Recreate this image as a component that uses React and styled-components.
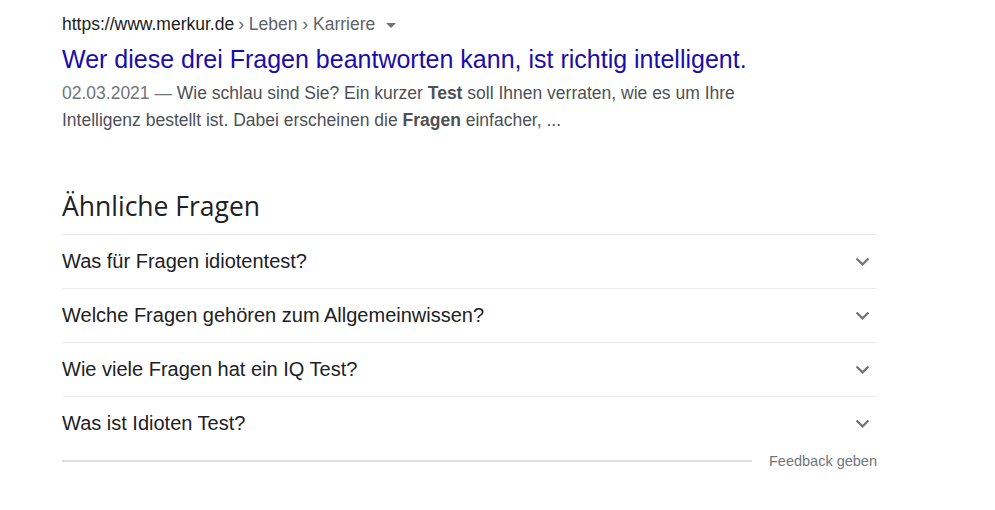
import React from 'react'
import styled, { createGlobalStyle } from 'styled-components'

const GlobalStyle = createGlobalStyle`
  body {
    margin: 0;
    background: #fff;
    font-family: 'Liberation Sans', Arial, sans-serif;
  }
`

const Page = styled.div`
  width: 815px;
  padding: 12px 0 0 62px;
`

const Result = styled.div`
  width: 700px;
`

const UrlLine = styled.div`
  display: flex;
  align-items: center;
  font-size: 17.5px;
  line-height: 24px;
  color: #202124;
`

const Crumbs = styled.span`
  color: #5f6368;
  margin-left: 4px;
`

const Caret = styled.span`
  display: inline-block;
  margin-left: 11px;
  margin-top: 2px;
  border-left: 5px solid transparent;
  border-right: 5px solid transparent;
  border-top: 5px solid #70757a;
`

const Title = styled.a`
  display: block;
  margin-top: 8px;
  font-size: 25px;
  line-height: 30px;
  color: #1a0dab;
  text-decoration: none;
  white-space: nowrap;
`

const Snippet = styled.div`
  margin-top: 6px;
  font-size: 17.5px;
  line-height: 27px;
  color: #4d5156;
`

const Date = styled.span`
  color: #70757a;
`

const Bold = styled.b`
  color: #4d5156;
`

const Related = styled.div`
  margin-top: 56px;
`

const Heading = styled.h2`
  margin: 0;
  font-family: 'Open Sans', Roboto, sans-serif;
  font-weight: 400;
  font-size: 26.5px;
  line-height: 32px;
  color: #202124;
  padding-bottom: 12px;
  border-bottom: 1px solid #ebebeb;
`

const Row = styled.div`
  display: flex;
  align-items: center;
  justify-content: space-between;
  height: 53px;
  border-bottom: ${(p) => (p.last ? 'none' : '1px solid #ebebeb')};
  font-size: 20px;
  color: #202124;
`

const Chevron = styled.svg`
  width: 27px;
  height: 27px;
  margin-right: 1px;
  fill: #70757a;
`

const Footer = styled.div`
  display: flex;
  align-items: center;
  gap: 17px;
  margin-top: 2px;
`

const Line = styled.div`
  flex: 1;
  height: 2px;
  background: #dadce0;
`

const Feedback = styled.span`
  font-size: 14.5px;
  line-height: 18px;
  color: #70757a;
`

const questions = [
  'Was für Fragen idiotentest?',
  'Welche Fragen gehören zum Allgemeinwissen?',
  'Wie viele Fragen hat ein IQ Test?',
  'Was ist Idioten Test?',
]

const App = () => {
  return (
    <>
      <GlobalStyle />
      <Page>
        <Result>
          <UrlLine>
            https://www.merkur.de<Crumbs>› Leben › Karriere</Crumbs>
            <Caret />
          </UrlLine>
          <Title href='#'>
            Wer diese drei Fragen beantworten kann, ist richtig intelligent.
          </Title>
          <Snippet>
            <Date>02.03.2021 — </Date>Wie schlau sind Sie? Ein kurzer{' '}
            <Bold>Test</Bold> soll Ihnen verraten, wie es um Ihre Intelligenz
            bestellt ist. Dabei erscheinen die <Bold>Fragen</Bold> einfacher, ...
          </Snippet>
        </Result>
        <Related>
          <Heading>Ähnliche Fragen</Heading>
          {questions.map((q, i) => (
            <Row key={q} last={i === questions.length - 1}>
              {q}
              <Chevron viewBox='0 0 24 24'>
                <path d='M16.59 8.59L12 13.17 7.41 8.59 6 10l6 6 6-6z' />
              </Chevron>
            </Row>
          ))}
          <Footer>
            <Line />
            <Feedback>Feedback geben</Feedback>
          </Footer>
        </Related>
      </Page>
    </>
  )
}

export default App
